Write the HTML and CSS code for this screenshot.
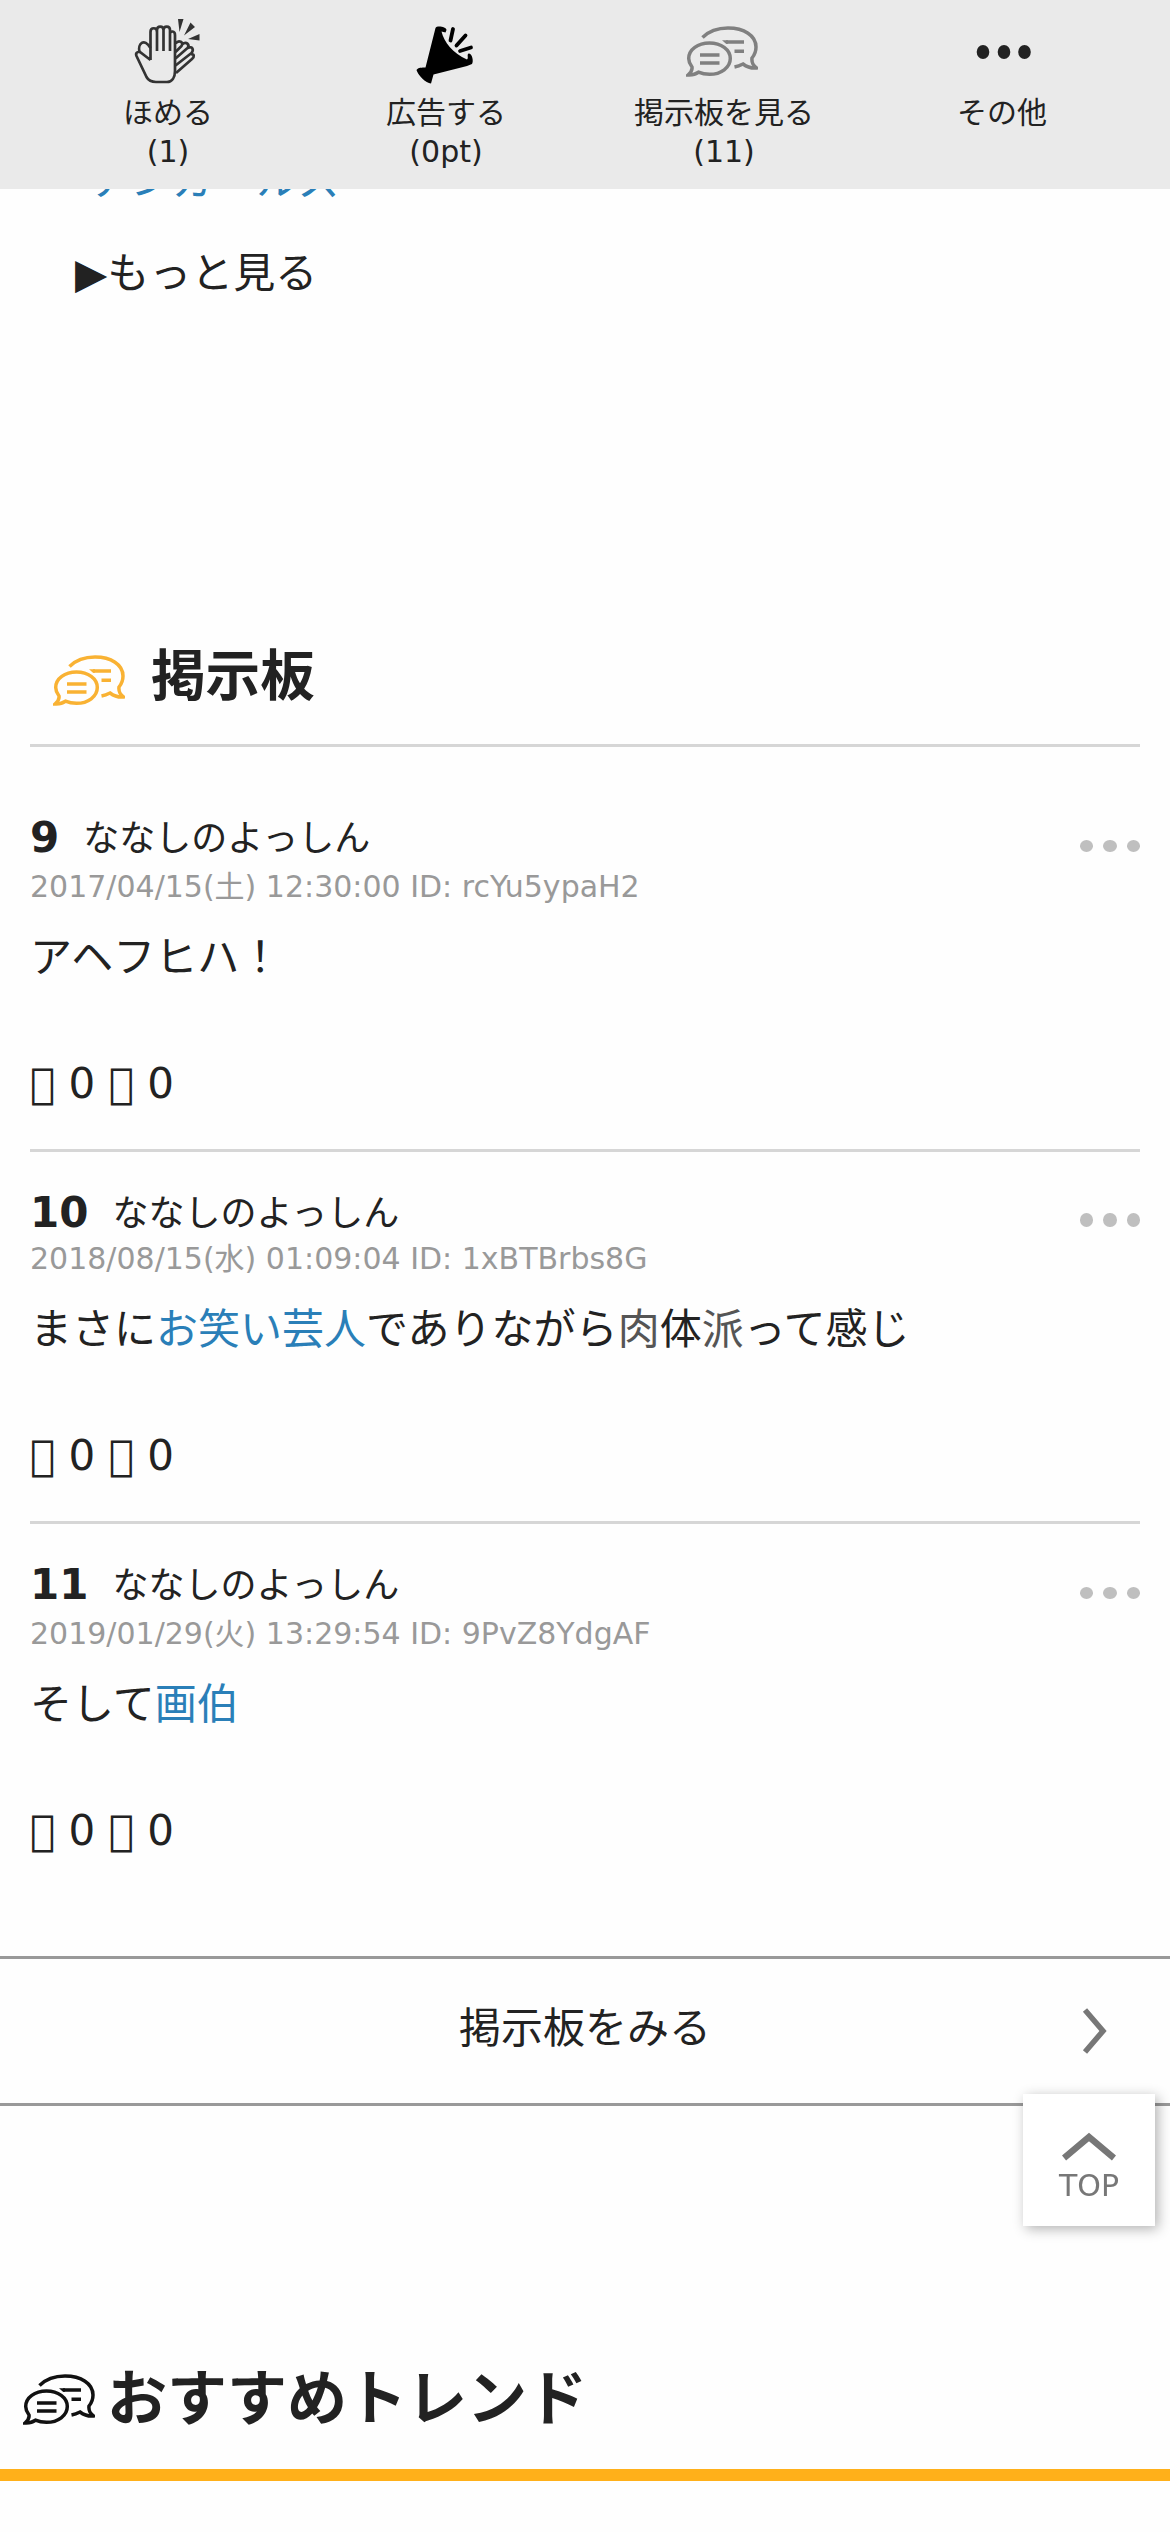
FILE: index.html
```html
<!DOCTYPE html>
<html lang="ja">
<head>
<meta charset="utf-8">
<title>掲示板</title>
<link rel="stylesheet" href="styles.css">
</head>
<body>
<svg class="defs" width="0" height="0">
  <symbol id="bubbles" viewBox="0 0 72 51" fill="none" stroke="currentColor" stroke-width="3.500">
    <path d="M16.500 11.500C23 5 32 2 42 2C58 2 70 9.500 70 21C70 26 68.500 29 66 32C65.500 36 67 39.500 70.500 42C65 42.500 61 41 57 38C54 39.500 51 40.500 48.500 41"/>
    <path d="M2 49C5 46.500 6.500 44 6 41C3.700 38 2.700 35.500 2.700 32.500C2.700 23.500 12 17 23.500 17C35 17 44.300 23.500 44.300 32.500C44.300 41.500 35 48.300 23.500 48.300C19.500 48.300 15.500 47.500 12.500 46.200C9.500 48.500 6 49.200 2 49Z"/>
    <path d="M14 29H33.500M14 37H33.500M40 16H58M48.500 25.300H58"/>
    <path d="M36 14.300H42V17.700H40Z" fill="currentColor" stroke="none"/>
  </symbol>
</svg>

<header class="nav">
  <a class="nav-item">
    <svg class="nav-icon" viewBox="-2 0 90 84" fill="none" stroke="#333" stroke-width="2.700" stroke-linejoin="round">
      <path d="M25.500 50V22C25.500 17 32 17 32 22V41M32 22V20C32 15.500 38.500 15.500 38.500 20V41M38.500 20C38.500 15.500 45 15.500 45 20V41M45 24C45 20.500 50 20.500 50 25V61C50 67.500 47 72 42 72H31C26 72 23.500 70.500 21.500 67L11.500 46C10 42 14 40.500 17 43.500L25.500 50"/>
      <path d="M14.500 41.500C12.500 34 19 27 25.500 38M50.500 33.500C54 29 59 32.500 56.500 36L50.500 42M57 34.500C61.500 30.500 65 35 62.500 38L50.500 48.500M63 38C67.500 35.500 69 40 66.500 43L50.500 55.500M66 44.500C69.500 43.500 69.500 47 67 49L51 63"/>
      <path fill="#333" stroke="none" d="M53 9H58.500L54.500 22ZM65.500 12.500L70 17L59 25.500ZM74.500 24V30.500L63 29Z"/>
    </svg>
    <span>ほめる</span><span>(1)</span>
  </a>
  <a class="nav-item">
    <svg class="nav-icon" viewBox="-4 0 90 84">
      <path d="M30.500 18C32 15 41.500 17 41.500 20L40.500 22.500L36.500 21.500C39 32 48 43.500 62 49.500C64 48 61.500 45 63.500 43.500C67 43 69 51 67 54L62 56L28.500 64.500L26 73.500C21 73.500 12.500 64.500 11.500 60C13 57.500 17 57.500 20.500 57.500Z"/>
      <path d="M48 19L45.500 30.500M60.500 25.500L51.500 35.500M66 37.500L55 41" stroke="#000" stroke-width="3.800" stroke-linecap="round"/>
    </svg>
    <span>広告する</span><span>(0pt)</span>
  </a>
  <a class="nav-item">
    <svg class="nav-icon nav-bubbles"><use href="#bubbles"/></svg>
    <span>掲示板を見る</span><span>(11)</span>
  </a>
  <a class="nav-item">
    <svg class="nav-icon" viewBox="0 0 90 84" fill="#222"><ellipse cx="26" cy="42" rx="6.300" ry="6.900"/><ellipse cx="47" cy="42" rx="6.300" ry="6.900"/><ellipse cx="67.500" cy="42" rx="6.300" ry="6.900"/></svg>
    <span>その他</span>
  </a>
</header>

<main>
  <div class="related">
    <a class="link related-name">アンガールズ</a>
    <p class="more">▶もっと見る</p>
  </div>

  <section class="board">
    <h2 class="board-title"><svg class="title-icon"><use href="#bubbles"/></svg>掲示板</h2>

    <article class="post post-first">
      <div class="post-head"><b>9</b><span class="name">ななしのよっしん</span><i class="dots"><i></i><i></i><i></i></i></div>
      <p class="meta">2017/04/15(土) 12:30:00 ID: rcYu5ypaH2</p>
      <p class="body">アヘフヒハ！</p>
      <p class="votes">&#xE001; 0 &#xE002; 0</p>
    </article>
    <article class="post post-tight">
      <div class="post-head"><b>10</b><span class="name">ななしのよっしん</span><i class="dots"><i></i><i></i><i></i></i></div>
      <p class="meta">2018/08/15(水) 01:09:04 ID: 1xBTBrbs8G</p>
      <p class="body">まさに<a class="link">お笑い芸人</a>でありながら<span class="soft">肉</span>体<span class="soft">派</span>って感じ</p>
      <p class="votes">&#xE001; 0 &#xE002; 0</p>
    </article>
    <article class="post">
      <div class="post-head"><b>11</b><span class="name">ななしのよっしん</span><i class="dots"><i></i><i></i><i></i></i></div>
      <p class="meta">2019/01/29(火) 13:29:54 ID: 9PvZ8YdgAF</p>
      <p class="body">そして<a class="link">画伯</a></p>
      <p class="votes">&#xE001; 0 &#xE002; 0</p>
    </article>
  </section>

  <a class="see-board">掲示板をみる
    <svg class="chevron" viewBox="0 0 26 48" fill="none" stroke="#777" stroke-width="5.500"><path d="M3 3L21 24L3 45"/></svg>
  </a>

  <h2 class="trend"><svg class="trend-icon"><use href="#bubbles"/></svg>おすすめトレンド</h2>
</main>

<a class="to-top">
  <svg viewBox="0 0 54 30" fill="none" stroke="#777" stroke-width="6.500"><path d="M2 26L27 5L52 26"/></svg>
  TOP
</a>
</body>
</html>
```
FILE: styles.css
```css
* { box-sizing: border-box; }
body {
  margin: 0;
  height: 2532px;
  overflow: hidden;
  background: #fefefe;
  color: #222;
  font: 42px/63px "DejaVu Sans", "Noto Sans CJK JP", sans-serif;
}
p, h2 { margin: 0; }
i { font-style: normal; }
.defs { display: block; }
.link { color: #2a7fb8; }

.nav {
  position: fixed;
  z-index: 2;
  top: 0;
  left: 0;
  width: 100%;
  height: 189px;
  padding: 10px 29px 0;
  display: grid;
  grid-template-columns: repeat(4, 1fr);
  background: #eaeaea;
  font-size: 30px;
  line-height: 39px;
}
.nav-item { display: flex; flex-direction: column; align-items: center; }
.nav-icon { width: 90px; height: 84px; margin-bottom: -1px; overflow: visible; }
.nav-bubbles { width: 72px; height: 51px; margin: 16px 5px 16px 0; color: #808080; }

.related { padding: 149px 0 0 75px; height: 618px; }
.related-name { display: block; padding-left: 15px; height: 93px; }

.board { padding: 0 30px; }
.board-title {
  display: flex;
  align-items: center;
  gap: 26px;
  height: 129px;
  padding: 0 0 10px 23px;
  border-bottom: 3px solid #d6d6d6;
  font-size: 54.6px;
}
.title-icon { width: 72px; height: 51px; margin-top: 8px; color: #f9b233; }

.post { height: 372px; padding-top: 31px; border-bottom: 3px solid #d6d6d6; }
.post-first { height: 405px; padding-top: 61px; }
.post:last-child { height: 432px; border: 0; }
.post-head { display: flex; align-items: center; height: 58px; }
.name { margin-left: 24px; padding-top: 2px; font-size: 36px; }
.dots { display: flex; gap: 10px; margin: 18px 0 0 auto; }
.dots i { width: 13.4px; height: 12px; border-radius: 50%; background: #bfbfbf; }
.meta { height: 42px; line-height: 42px; font-size: 30px; color: #999; }
.post-tight .meta { margin-top: -3px; }
.post-tight .dots { margin-top: 16px; }
.post-tight .dots i { height: 14px; }
.body { margin-top: 18px; }
.votes { margin-top: 63px; }
.soft { color: #555; }

.see-board {
  display: flex;
  align-items: center;
  justify-content: center;
  height: 150px;
  padding-bottom: 6px;
  border: solid #999;
  border-width: 3px 0;
  position: relative;
}
.chevron { position: absolute; right: 62px; top: 48px; width: 26px; height: 48px; }

.trend {
  display: flex;
  align-items: center;
  gap: 12px;
  height: 145px;
  margin-top: 230px;
  padding: 0 0 7px 23px;
  border-bottom: 12px solid #ffb01a;
  font-size: 60px;
}
.trend-icon { width: 72px; height: 51px; color: #111; }

.to-top {
  position: fixed;
  left: 1023px;
  top: 2094px;
  width: 132px;
  height: 132px;
  padding-top: 38px;
  display: flex;
  flex-direction: column;
  align-items: center;
  background: #fff;
  box-shadow: 3px 3px 12px rgba(0, 0, 0, .3);
  color: #777;
  font-size: 30px;
  line-height: 48px;
}
.to-top svg { width: 54px; height: 30px; }
```
